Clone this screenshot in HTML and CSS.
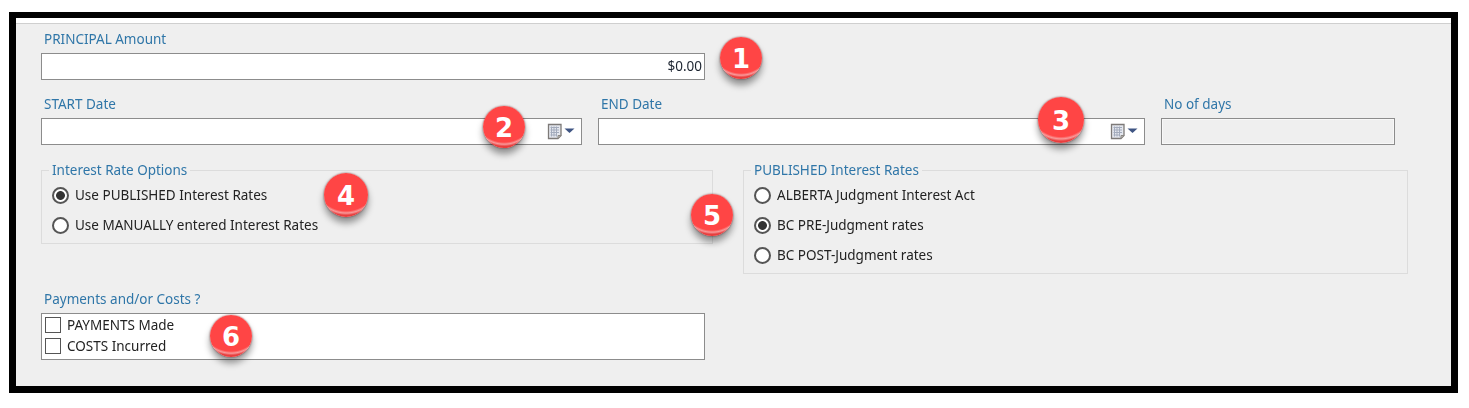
FILE: index.html
```html
<!DOCTYPE html>
<html lang="en">
<head>
    <meta charset="UTF-8">
    <meta name="viewport" content="width=device-width, initial-scale=1.0">
    <title>Interest Calculator</title>
    <link rel="stylesheet" href="styles.css">
</head>
<body>
    <div class="frame">
        <div class="panel">
            <div class="field principal">
                <label class="field-label">PRINCIPAL Amount</label>
                <div class="text-box amount">$0.00</div>
            </div>

            <div class="date-row">
                <div class="field">
                    <label class="field-label">START Date</label>
                    <div class="text-box date-box">
                        <svg class="cal-icon" width="28" height="17" viewBox="0 0 28 17">
                            <path d="M1.500 1.500h12.500v11l-3 3h-9.500z" fill="#e4e7ee" stroke="#7d7a78" stroke-width="1.300"/>
                            <path d="M3.500 4.500h8.500M3.500 7h8.500M3.500 9.500h8.500M3.500 12h6.500M4.500 3.500v10M7 3.500v10M9.500 3.500v10" stroke="#a3abbc"/>
                            <path d="M14 12.500l-3 3v-3z" fill="#c9c6c2" stroke="#8b8884"/>
                            <path d="M17.500 5.500h10l-5 4.500z" fill="#3f5583"/>
                        </svg>
                    </div>
                </div>
                <div class="field">
                    <label class="field-label">END Date</label>
                    <div class="text-box date-box">
                        <svg class="cal-icon" width="28" height="17" viewBox="0 0 28 17">
                            <path d="M1.500 1.500h12.500v11l-3 3h-9.500z" fill="#e4e7ee" stroke="#7d7a78" stroke-width="1.300"/>
                            <path d="M3.500 4.500h8.500M3.500 7h8.500M3.500 9.500h8.500M3.500 12h6.500M4.500 3.500v10M7 3.500v10M9.500 3.500v10" stroke="#a3abbc"/>
                            <path d="M14 12.500l-3 3v-3z" fill="#c9c6c2" stroke="#8b8884"/>
                            <path d="M17.500 5.500h10l-5 4.500z" fill="#3f5583"/>
                        </svg>
                    </div>
                </div>
                <div class="field">
                    <label class="field-label">No of days</label>
                    <div class="text-box readonly"></div>
                </div>
            </div>

            <div class="group-row">
                <fieldset class="group">
                    <legend>Interest Rate Options</legend>
                    <label class="radio-row"><input type="radio" name="opt" checked>Use PUBLISHED Interest Rates</label>
                    <label class="radio-row"><input type="radio" name="opt">Use MANUALLY entered Interest Rates</label>
                </fieldset>
                <fieldset class="group">
                    <legend>PUBLISHED Interest Rates</legend>
                    <label class="radio-row"><input type="radio" name="rate">ALBERTA Judgment Interest Act</label>
                    <label class="radio-row"><input type="radio" name="rate" checked>BC PRE-Judgment rates</label>
                    <label class="radio-row"><input type="radio" name="rate">BC POST-Judgment rates</label>
                </fieldset>
            </div>

            <div class="field payments">
                <label class="field-label">Payments and/or Costs ?</label>
                <div class="list-box">
                    <label class="check-row"><input type="checkbox">PAYMENTS Made</label>
                    <label class="check-row"><input type="checkbox">COSTS Incurred</label>
                </div>
            </div>
        </div>

        <!-- numbered callouts sit on top of the form -->
        <div class="badge badge-1">1</div>
        <div class="badge badge-2">2</div>
        <div class="badge badge-3">3</div>
        <div class="badge badge-4">4</div>
        <div class="badge badge-5">5</div>
        <div class="badge badge-6">6</div>
    </div>
</body>
</html>
```

FILE: styles.css
```css
:root {
    --label: #2f76a8;
    --line: #8c8c8c;
    --panel: #efefef;
}

* {
    box-sizing: border-box;
}

body {
    margin: 0;
    padding: 12px 0 0 9px;
    background: white;
    font-family: 'Noto Sans', sans-serif;
    font-size: 13.5px;
    color: #222;
    overflow: hidden;
}

.frame {
    position: relative;
    width: 1449px;
    height: 381px;
    border: solid black;
    border-width: 6px 7px 7px 7px;
}

.panel {
    height: 100%;
    padding: 8px 25px 0 25px;
    background: var(--panel);
    border-top: 5px solid white;
    box-shadow: inset 0 1px 0 #cfcfcf;
    filter: blur(0.3px);
}

.field-label {
    display: block;
    height: 16px;
    line-height: 16px;
    margin-bottom: 6px;
    padding-left: 3px;
    color: var(--label);
}

.text-box {
    height: 27px;
    background: white;
    border: 1.5px solid var(--line);
}

.principal {
    width: 664px;
}

.amount {
    line-height: 25px;
    padding-right: 2px;
    text-align: right;
    color: #1c2430;
}

.date-row {
    display: grid;
    grid-template-columns: 541px 547px 234px;
    column-gap: 16px;
    margin-top: 16px;
}

.date-box {
    display: flex;
    align-items: center;
    justify-content: flex-end;
    padding-right: 6px;
}

.readonly {
    background: var(--panel);
    box-shadow: inset 0 0 0 1px #f8f8f8;
}

.group-row {
    display: grid;
    grid-template-columns: 672px 665px;
    column-gap: 30px;
    align-items: start;
    margin-top: 17px;
}

.group {
    margin: 0;
    padding: 2px 0 3px 10px;
    border: 1px solid #dcdcdc;
}

.group legend {
    height: 16px;
    line-height: 16px;
    margin-left: -3px;
    padding: 0 3px;
    color: var(--label);
}

.radio-row {
    display: flex;
    align-items: center;
    gap: 6px;
    height: 30px;
}

.radio-row input {
    appearance: none;
    width: 17px;
    height: 17px;
    margin: 0;
    border: 2px solid #555;
    border-radius: 50%;
    background: white;
}

.radio-row input:checked {
    background: radial-gradient(circle, #333 0 4px, white 4.8px);
}

.payments {
    width: 664px;
    margin-top: 17px;
}

.list-box {
    height: 47px;
    padding: 0 3px;
    background: white;
    border: 1.5px solid var(--line);
}

.check-row {
    display: flex;
    align-items: center;
    gap: 6px;
    height: 21px;
}

.check-row input {
    appearance: none;
    width: 16px;
    height: 16px;
    margin: 1px 0 0;
    border: 1.5px solid #555;
    background: white;
}

.badge {
    position: absolute;
    width: 42px;
    height: 42px;
    border-radius: 50%;
    background: radial-gradient(circle at 50% 15%, #ff4545 0 72%, #f79a9a 77%, #e83e3e 82%);
    box-shadow: 0 6px 7px rgba(0, 0, 0, 0.4), 0 0 2px rgba(90, 0, 0, 0.7);
    color: white;
    font-family: 'DejaVu Sans', sans-serif;
    font-size: 26px;
    font-weight: 700;
    line-height: 44px;
    text-align: center;
}

.badge-1 { left: 704px; top: 19px; }
.badge-2 { left: 467px; top: 88px; }
.badge-3 { left: 1022px; top: 79px; width: 46px; height: 46px; line-height: 48px; }
.badge-4 { left: 308px; top: 155px; width: 44px; height: 44px; line-height: 46px; }
.badge-5 { left: 675px; top: 176px; }
.badge-6 { left: 194px; top: 297px; }
```
